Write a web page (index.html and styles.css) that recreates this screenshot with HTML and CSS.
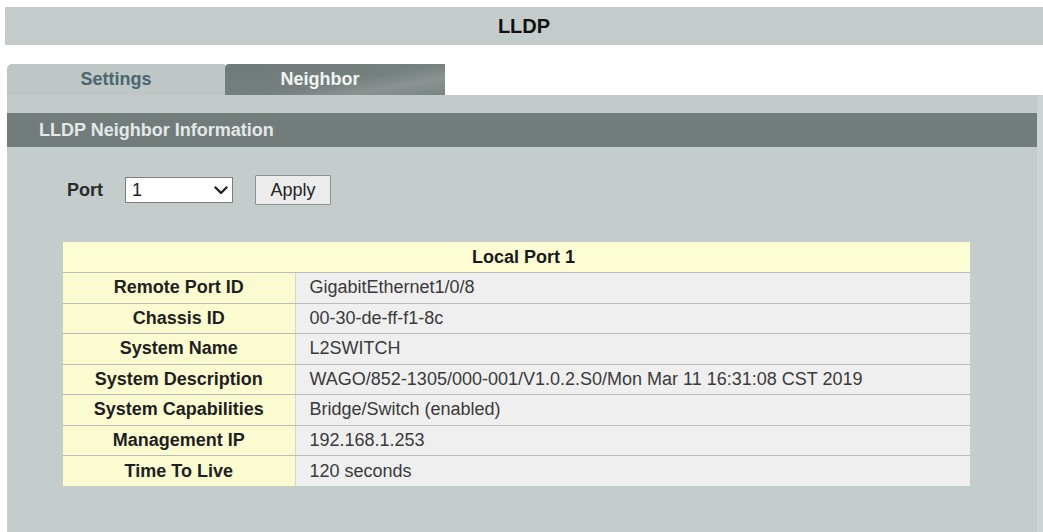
FILE: index.html
```html
<!DOCTYPE html>
<html lang="en">
<head>
<meta charset="utf-8">
<title>LLDP</title>
<link rel="stylesheet" href="styles.css">
</head>
<body>
<div class="page">
  <div class="title">LLDP</div>

  <div class="tabs">
    <div class="tab">Settings</div>
    <div class="tab active">Neighbor</div>
  </div>

  <div class="panel">
    <div class="strip"></div>
    <div class="panel-head">LLDP Neighbor Information</div>
    <div class="panel-body">
      <div class="port-row">
        <span class="port-label">Port</span>
        <div class="select-box">
          <span>1</span>
          <svg class="chevron" width="14" height="9" viewBox="0 0 14 9"><path d="M1.5 1.5 L7 7 L12.5 1.5" fill="none" stroke="#222" stroke-width="2.4" stroke-linecap="round" stroke-linejoin="round"/></svg>
        </div>
        <button class="btn" type="button">Apply</button>
      </div>

      <table class="info">
        <thead>
          <tr><th colspan="2">Local Port 1</th></tr>
        </thead>
        <tbody>
          <tr><th>Remote Port ID</th><td>GigabitEthernet1/0/8</td></tr>
          <tr><th>Chassis ID</th><td>00-30-de-ff-f1-8c</td></tr>
          <tr><th>System Name</th><td>L2SWITCH</td></tr>
          <tr><th>System Description</th><td>WAGO/852-1305/000-001/V1.0.2.S0/Mon Mar 11 16:31:08 CST 2019</td></tr>
          <tr><th>System Capabilities</th><td>Bridge/Switch (enabled)</td></tr>
          <tr><th>Management IP</th><td>192.168.1.253</td></tr>
          <tr><th>Time To Live</th><td>120 seconds</td></tr>
        </tbody>
      </table>
    </div>
  </div>
</div>
</body>
</html>
```

FILE: styles.css
```css
* {
  box-sizing: border-box;
}

html, body {
  margin: 0;
  padding: 0;
  background: #ffffff;
  height: 100%;
  overflow: hidden;
}

body {
  font-family: "Liberation Sans", Arial, sans-serif;
  font-size: 18px;
  color: #222;
}

.page {
  padding-top: 7px;
  height: 100%;
  display: flex;
  flex-direction: column;
}

/* page title bar */
.title {
  margin-left: 5px;
  height: 38px;
  background: #c3cbcb;
  display: flex;
  align-items: center;
  justify-content: center;
  font-weight: bold;
  font-size: 20px;
  color: #111;
}

/* tab strip */
.tabs {
  margin-top: 19px;
  margin-left: 7px;
  display: flex;
  height: 31px;
}

.tab {
  width: 218px;
  display: flex;
  align-items: center;
  justify-content: center;
  font-weight: bold;
  color: #4c6670;
  background: #bec6c6;
  border-top-left-radius: 5px;
}

.tab.active {
  width: 220px;
  color: #f2f4f4;
  background: linear-gradient(170deg, #6f7a78 0%, #76807e 55%, #8a9391 75%, #7a8482 100%);
  border-top-left-radius: 4px;
  padding-right: 30px;
}

/* content panel */
.panel {
  flex: 1;
  margin-left: 7px;
  background: #c4cccc;
  border-right: 6px solid #cdd4d4;
  display: flex;
  flex-direction: column;
}

.strip {
  height: 18px;
  background: #c3cbca;
}

.panel-head {
  height: 34px;
  background: #717c7b;
  color: #e4e8e8;
  font-weight: bold;
  display: flex;
  align-items: center;
  padding-left: 32px;
}

.panel-body {
  flex: 1;
  padding: 28px 0 0 56px;
}

/* port selector row */
.port-row {
  display: flex;
  align-items: center;
  height: 30px;
}

.port-label {
  font-weight: bold;
  color: #2b2b2b;
  margin-left: 4px;
  margin-right: 22px;
}

.select-box {
  width: 108px;
  height: 26px;
  background: #ffffff;
  border: 1px solid #7b7f7f;
  display: flex;
  align-items: center;
  justify-content: space-between;
  padding: 0 4px 0 6px;
  color: #222;
}

.chevron {
  margin-top: 1px;
}

.btn {
  margin-left: 22px;
  width: 76px;
  height: 30px;
  font-family: inherit;
  font-size: 18px;
  color: #222;
  background: #ececec;
  border: 1px solid #8d9191;
  border-radius: 1px;
  padding: 0;
}

/* neighbor details table */
.info {
  margin-top: 37px;
  width: 907px;
  border-collapse: collapse;
}

.info th,
.info td {
  height: 30.5px;
  padding: 0;
  border-bottom: 1px solid #bcbdbb;
}

.info tbody tr:last-child th,
.info tbody tr:last-child td {
  border-bottom: none;
}

.info thead th {
  background: #fdfdd3;
  text-align: center;
  font-weight: bold;
  color: #1a1a1a;
  padding-left: 14px;
}

.info tbody th {
  width: 232px;
  background: #fbfbd1;
  font-weight: bold;
  color: #1f1f1f;
  text-align: center;
  border-right: 1px solid #d8d8c4;
}

.info tbody td {
  background: #efefef;
  color: #3a3a3a;
  padding-left: 14px;
}
```
